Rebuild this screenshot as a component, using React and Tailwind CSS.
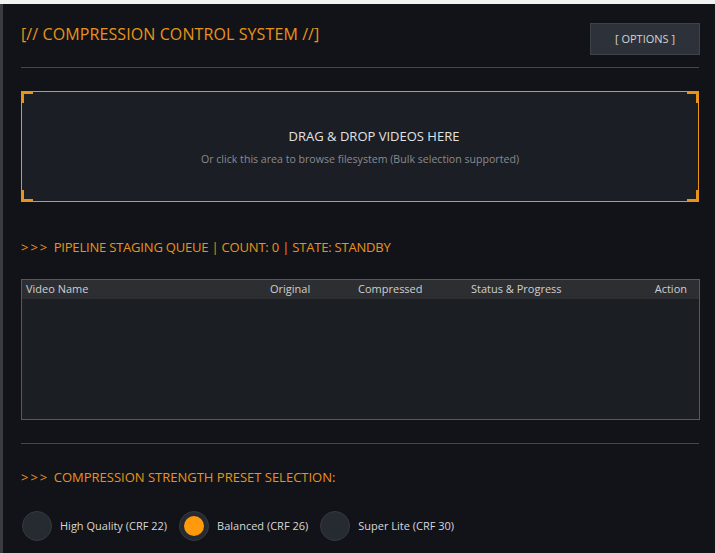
import React from "react";

const Corner = ({ pos }) => {
  const map = {
    tl: "-top-[1px] -left-[1px] border-t-[3px] border-l-[3px]",
    tr: "-top-[1px] -right-[1px] border-t-[3px] border-r-[3px]",
    bl: "-bottom-[1px] -left-[1px] border-b-[3px] border-l-[3px]",
    br: "-bottom-[1px] -right-[1px] border-b-[3px] border-r-[3px]",
  };
  return <div className={`absolute w-[12px] h-[12px] border-[color:#e8931a] ${map[pos]}`} />;
};

const Radio = ({ label, selected }) => (
  <div className="flex items-center gap-[8px]">
    <div className="w-[30px] h-[30px] rounded-full bg-[#262a31] border border-[#353940] flex items-center justify-center">
      {selected && <div className="w-[20px] h-[20px] rounded-full bg-[#ff9a0c]" />}
    </div>
    <span className="text-[11px] text-[#d8d8d8]">{label}</span>
  </div>
);

const Arrows = () => <span className="tracking-[2px] mr-[1px]">&gt;&gt;&gt;</span>;

export default function App() {
  return (
    <div
      className="w-[715px] h-[553px] bg-[#f2f2f2] pt-[4px] overflow-hidden"
      style={{ fontFamily: '"Open Sans", "Noto Sans", sans-serif' }}
    >
      <div className="h-full border-l-[3px] border-[#3a3c41] bg-[#121318] pl-[18px] pr-[16px] pt-[18px] flex flex-col">
        <div className="flex items-start justify-between">
          <h1 className="text-[16px] leading-[24px] text-[#e8931a] tracking-[0.1px]">
            [// COMPRESSION CONTROL SYSTEM //]
          </h1>
          <button className="w-[110px] h-[32px] mt-[1px] bg-[#2d323a] border border-[#3d434b] text-[11px] text-[#d4d4d4] mr-[-1px]">
            [ OPTIONS ]
          </button>
        </div>
        <div className="mt-[12px] h-px bg-[#45464b]" />
        <div className="relative mt-[23px] h-[111px] border border-solid border-[color:#e8931a] bg-[#1b1e24] flex flex-col items-center justify-center">
          <Corner pos="tl" />
          <Corner pos="tr" />
          <Corner pos="bl" />
          <Corner pos="br" />
          <div className="text-[13px] text-[#e2e2e2] leading-[16px] mt-[1px] ml-[28px]">DRAG &amp; DROP VIDEOS HERE</div>
          <div className="text-[10.6px] text-[#8a8b8f] leading-[14px] mt-[8px]">
            Or click this area to browse filesystem (Bulk selection supported)
          </div>
        </div>
        <div className="mt-[35px] text-[13px] leading-[20px] text-[#e8931a]">
          <Arrows /> <span className="tracking-[-0.2px]">PIPELINE STAGING QUEUE | COUNT: 0 | STATE: STANDBY</span>
        </div>
        <div className="mt-[22px] h-[141px] border border-[#56585d] bg-[#1b1e23] mr-[-1px]">
          <div className="h-[19px] bg-[#2d2e32] flex items-center text-[11px] text-[#cfcfcf] pl-[4px] pr-[12px]">
            <span className="w-[244px]">Video Name</span>
            <span className="w-[88px]">Original</span>
            <span className="w-[113px]">Compressed</span>
            <span className="flex-1">Status &amp; Progress</span>
            <span>Action</span>
          </div>
        </div>
        <div className="mt-[23px] h-px bg-[#45464b]" />
        <div className="mt-[23px] text-[13px] leading-[20px] text-[#e8931a]">
          <Arrows /> COMPRESSION STRENGTH PRESET SELECTION:
        </div>
        <div className="mt-[24px] ml-[1px] flex items-center gap-[12px]">
          <Radio label="High Quality (CRF 22)" />
          <Radio label="Balanced (CRF 26)" selected />
          <Radio label="Super Lite (CRF 30)" />
        </div>
      </div>
    </div>
  );
}
